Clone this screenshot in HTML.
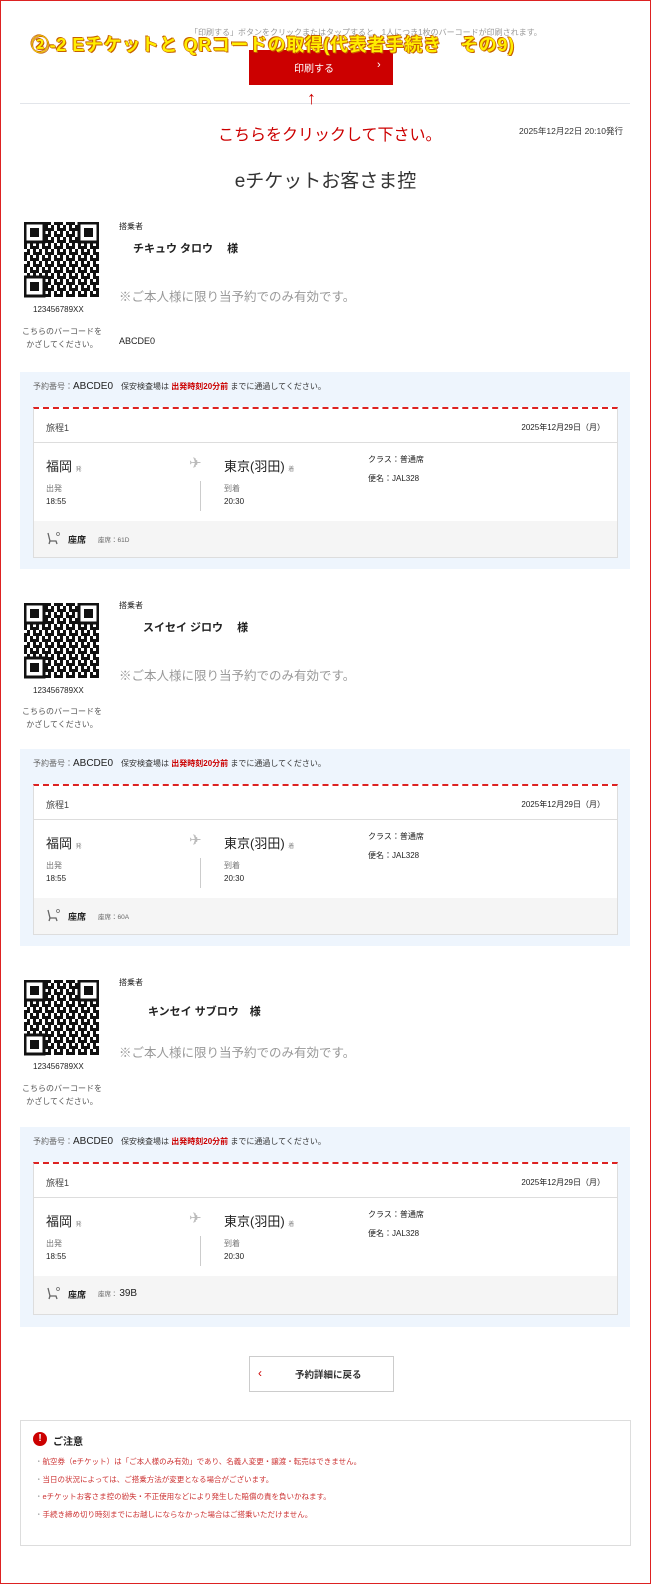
<!DOCTYPE html>
<html><head><meta charset="utf-8"><style>
*{margin:0;padding:0;box-sizing:border-box}
body{width:651px;height:1585px;position:relative;background:#fff;font-family:"Liberation Sans","Noto Sans CJK JP",sans-serif;color:#222;overflow:hidden}
.a{position:absolute;white-space:nowrap}
.frame{position:absolute;left:0;top:0;width:651px;height:1584px;border:1.5px solid #d22;}
.box{position:absolute;left:20px;width:610px;background:#eef5fd}
.card{position:absolute;left:13px;width:585px;background:#fff;border:1px solid #ddd}
.s9{font-size:9px}.s8{font-size:8px}
</style></head><body>
<svg width="0" height="0" style="position:absolute">
<defs>
<pattern id="pt" width="12" height="12" patternUnits="userSpaceOnUse">
<rect x="0" y="0" width="3" height="3" fill="#111"/><rect x="6" y="0" width="6" height="3" fill="#111"/><rect x="3" y="3" width="3" height="3" fill="#111"/><rect x="9" y="3" width="3" height="6" fill="#111"/><rect x="0" y="6" width="6" height="3" fill="#111"/><rect x="6" y="9" width="3" height="3" fill="#111"/><rect x="0" y="9" width="3" height="3" fill="#111"/></pattern>
<g id="qr">
<rect width="75" height="75" fill="#fff"/>
<rect width="75" height="75" fill="url(#pt)"/>
<g id="f"><rect width="21" height="21" fill="#fff"/><rect x="1" y="1" width="19" height="19" fill="none" stroke="#111" stroke-width="3"/><rect x="6" y="6" width="9" height="9" fill="#111"/></g>
<use href="#f" x="54"/><use href="#f" y="54"/>
</g>
<g id="seat" fill="none" stroke="#666" stroke-width="1.3"><path d="M2 1 L4 9 L10 9 L11 12"/><path d="M4 9 L3 12"/><circle cx="12" cy="2" r="1.5" stroke-width="0.7"/></g>
</defs></svg>
<div class="frame"></div>

<div class="a" style="left:190px;top:27px;font-size:8px;color:#999">「印刷する」ボタンをクリックまたはタップすると、1人につき1枚のバーコードが印刷されます。</div>
<div class="a" style="left:249px;top:50px;width:144px;height:35px;background:#cc0000;color:#fff;font-size:10px"><span class="a" style="left:45px;top:10px">印刷する</span><span class="a" style="left:128px;top:9px;font-size:11px">›</span></div>
<div class="a" style="left:31px;top:31px;font-size:18px;letter-spacing:0.6px;font-weight:bold;color:#ffee00;-webkit-text-stroke:0.8px #c66000;paint-order:stroke;text-shadow:0 0 1px #c66000,1px 1px 0 #c66000,-1px -1px 0 #c66000">②-2  Eチケットと QRコードの取得(代表者手続き　その9)</div>
<div class="a" style="left:20px;top:103px;width:610px;height:1px;background:#e2e5ea"></div>
<div class="a" style="left:307px;top:88px;font-size:18px;color:#c00">↑</div>
<div class="a" style="left:218px;top:121px;font-size:16px;color:#c00">こちらをクリックして下さい。</div>
<div class="a" style="left:519px;top:125px;font-size:8.5px;color:#333">2025年12月22日 20:10発行</div>
<div class="a" style="left:0;width:651px;text-align:center;top:166px;font-size:19px;color:#333">eチケットお客さま控</div>

<!-- block 1 -->
<svg class="a" style="left:24px;top:222px" width="75" height="76"><use href="#qr"/></svg>
<div class="a s8" style="left:33px;top:305px">123456789XX</div>
<div class="a s8" style="left:20px;top:325px;width:84px;text-align:center;line-height:13px;color:#555">こちらのバーコードを<br>かざしてください。</div>
<div class="a s8" style="left:119px;top:221px">搭乗者</div>
<div class="a" style="left:133px;top:240px;font-size:11px;font-weight:bold">チキュウ タロウ　 様</div>
<div class="a" style="left:119px;top:286px;font-size:12.5px;color:#999">※ご本人様に限り当予約でのみ有効です。</div>
<div class="a s9" style="left:119px;top:336px">ABCDE0</div>

<!-- block 2 -->
<svg class="a" style="left:24px;top:603px" width="75" height="76"><use href="#qr"/></svg>
<div class="a s8" style="left:33px;top:686px">123456789XX</div>
<div class="a s8" style="left:20px;top:705px;width:84px;text-align:center;line-height:13px;color:#555">こちらのバーコードを<br>かざしてください。</div>
<div class="a s8" style="left:119px;top:600px">搭乗者</div>
<div class="a" style="left:143px;top:619px;font-size:11px;font-weight:bold">スイセイ ジロウ　 様</div>
<div class="a" style="left:119px;top:665px;font-size:12.5px;color:#999">※ご本人様に限り当予約でのみ有効です。</div>

<!-- block 3 -->
<svg class="a" style="left:24px;top:980px" width="75" height="76"><use href="#qr"/></svg>
<div class="a s8" style="left:33px;top:1062px">123456789XX</div>
<div class="a s8" style="left:20px;top:1082px;width:84px;text-align:center;line-height:13px;color:#555">こちらのバーコードを<br>かざしてください。</div>
<div class="a s8" style="left:119px;top:977px">搭乗者</div>
<div class="a" style="left:148px;top:1003px;font-size:11px;font-weight:bold">キンセイ サブロウ　様</div>
<div class="a" style="left:119px;top:1042px;font-size:12.5px;color:#999">※ご本人様に限り当予約でのみ有効です。</div>

<!-- boxes -->
<div class="box" style="top:372px;height:197px">
 <div class="a s8" style="left:13px;top:9px;color:#666">予約番号：<span style="font-size:10px;color:#222">ABCDE0</span>　<span style="color:#333">保安検査場は <b style="color:#c00">出発時刻20分前</b> までに通過してください。</span></div>
 <div class="card" style="top:35px;height:36px;border-top:2px dashed #d22"><span class="a s9" style="left:12px;top:12px;color:#444">旅程1</span><span class="a s8" style="right:12px;top:13px">2025年12月29日（月）</span></div>
 <div class="card" style="top:70px;height:116px">
  <span class="a" style="left:12px;top:13px;font-size:13px">福岡 <small style="font-size:6px;color:#888">発</small></span>
  <span class="a" style="left:155px;top:11px;font-size:15px;color:#bbb">✈</span>
  <span class="a" style="left:190px;top:13px;font-size:13px">東京(羽田) <small style="font-size:6px;color:#888">着</small></span>
  <span class="a s8" style="left:334px;top:11px">クラス：普通席</span>
  <span class="a s8" style="left:334px;top:30px">便名：JAL328</span>
  <span class="a s8" style="left:12px;top:40px;color:#777">出発</span><span class="a s8" style="left:12px;top:54px">18:55</span>
  <div class="a" style="left:166px;top:38px;width:1px;height:30px;background:#ccc"></div>
  <span class="a s8" style="left:190px;top:40px;color:#777">到着</span><span class="a s8" style="left:190px;top:54px">20:30</span>
  <div class="a" style="left:0;top:78px;width:583px;height:36px;background:#f5f5f5"><svg class="a" style="left:12px;top:11px" width="14" height="13"><use href="#seat"/></svg><span class="a s9" style="left:34px;top:12px;font-weight:bold">座席</span><span class="a" style="left:64px;top:13px;font-size:6.5px;color:#666">座席：61D</span></div>
 </div>
</div>

<div class="box" style="top:749px;height:197px">
 <div class="a s8" style="left:13px;top:9px;color:#666">予約番号：<span style="font-size:10px;color:#222">ABCDE0</span>　<span style="color:#333">保安検査場は <b style="color:#c00">出発時刻20分前</b> までに通過してください。</span></div>
 <div class="card" style="top:35px;height:36px;border-top:2px dashed #d22"><span class="a s9" style="left:12px;top:12px;color:#444">旅程1</span><span class="a s8" style="right:12px;top:13px">2025年12月29日（月）</span></div>
 <div class="card" style="top:70px;height:116px">
  <span class="a" style="left:12px;top:13px;font-size:13px">福岡 <small style="font-size:6px;color:#888">発</small></span>
  <span class="a" style="left:155px;top:11px;font-size:15px;color:#bbb">✈</span>
  <span class="a" style="left:190px;top:13px;font-size:13px">東京(羽田) <small style="font-size:6px;color:#888">着</small></span>
  <span class="a s8" style="left:334px;top:11px">クラス：普通席</span>
  <span class="a s8" style="left:334px;top:30px">便名：JAL328</span>
  <span class="a s8" style="left:12px;top:40px;color:#777">出発</span><span class="a s8" style="left:12px;top:54px">18:55</span>
  <div class="a" style="left:166px;top:38px;width:1px;height:30px;background:#ccc"></div>
  <span class="a s8" style="left:190px;top:40px;color:#777">到着</span><span class="a s8" style="left:190px;top:54px">20:30</span>
  <div class="a" style="left:0;top:78px;width:583px;height:36px;background:#f5f5f5"><svg class="a" style="left:12px;top:11px" width="14" height="13"><use href="#seat"/></svg><span class="a s9" style="left:34px;top:12px;font-weight:bold">座席</span><span class="a" style="left:64px;top:13px;font-size:6.5px;color:#666">座席：60A</span></div>
 </div>
</div>

<div class="box" style="top:1127px;height:200px">
 <div class="a s8" style="left:13px;top:9px;color:#666">予約番号：<span style="font-size:10px;color:#222">ABCDE0</span>　<span style="color:#333">保安検査場は <b style="color:#c00">出発時刻20分前</b> までに通過してください。</span></div>
 <div class="card" style="top:35px;height:36px;border-top:2px dashed #d22"><span class="a s9" style="left:12px;top:12px;color:#444">旅程1</span><span class="a s8" style="right:12px;top:13px">2025年12月29日（月）</span></div>
 <div class="card" style="top:70px;height:118px">
  <span class="a" style="left:12px;top:13px;font-size:13px">福岡 <small style="font-size:6px;color:#888">発</small></span>
  <span class="a" style="left:155px;top:11px;font-size:15px;color:#bbb">✈</span>
  <span class="a" style="left:190px;top:13px;font-size:13px">東京(羽田) <small style="font-size:6px;color:#888">着</small></span>
  <span class="a s8" style="left:334px;top:11px">クラス：普通席</span>
  <span class="a s8" style="left:334px;top:30px">便名：JAL328</span>
  <span class="a s8" style="left:12px;top:40px;color:#777">出発</span><span class="a s8" style="left:12px;top:54px">18:55</span>
  <div class="a" style="left:166px;top:38px;width:1px;height:30px;background:#ccc"></div>
  <span class="a s8" style="left:190px;top:40px;color:#777">到着</span><span class="a s8" style="left:190px;top:54px">20:30</span>
  <div class="a" style="left:0;top:78px;width:583px;height:38px;background:#f5f5f5"><svg class="a" style="left:12px;top:11px" width="14" height="13"><use href="#seat"/></svg><span class="a s9" style="left:34px;top:12px;font-weight:bold">座席</span><span class="a" style="left:64px;top:12px;font-size:6.5px;color:#666">座席： <span style="font-size:10px;color:#222">39B</span></span></div>
 </div>
</div>

<div class="a" style="left:249px;top:1356px;width:145px;height:36px;border:1px solid #ccc;background:#fff"><span class="a" style="left:8px;top:9px;font-size:12px;color:#c00">‹</span><span class="a" style="left:45px;top:10px;font-size:9.5px;font-weight:bold;color:#333">予約詳細に戻る</span></div>

<div class="a" style="left:20px;top:1420px;width:611px;height:126px;border:1px solid #ddd;background:#fff">
 <span class="a" style="left:12px;top:11px;width:14px;height:14px;border-radius:50%;background:#c00;color:#fff;font-size:10px;font-weight:bold;text-align:center;line-height:14px">!</span>
 <span class="a" style="left:32px;top:12px;font-size:10px;font-weight:bold">ご注意</span>
 <div class="a" style="left:14px;top:32px;font-size:7.5px;line-height:17.5px;color:#c33"><span style="color:#aaa">・</span>航空券（eチケット）は「ご本人様のみ有効」であり、名義人変更・譲渡・転売はできません。<br><span style="color:#aaa">・</span>当日の状況によっては、ご搭乗方法が変更となる場合がございます。<br><span style="color:#aaa">・</span>eチケットお客さま控の紛失・不正使用などにより発生した賠償の責を負いかねます。<br><span style="color:#aaa">・</span>手続き締め切り時刻までにお越しにならなかった場合はご搭乗いただけません。</div>
</div>
</body></html>
